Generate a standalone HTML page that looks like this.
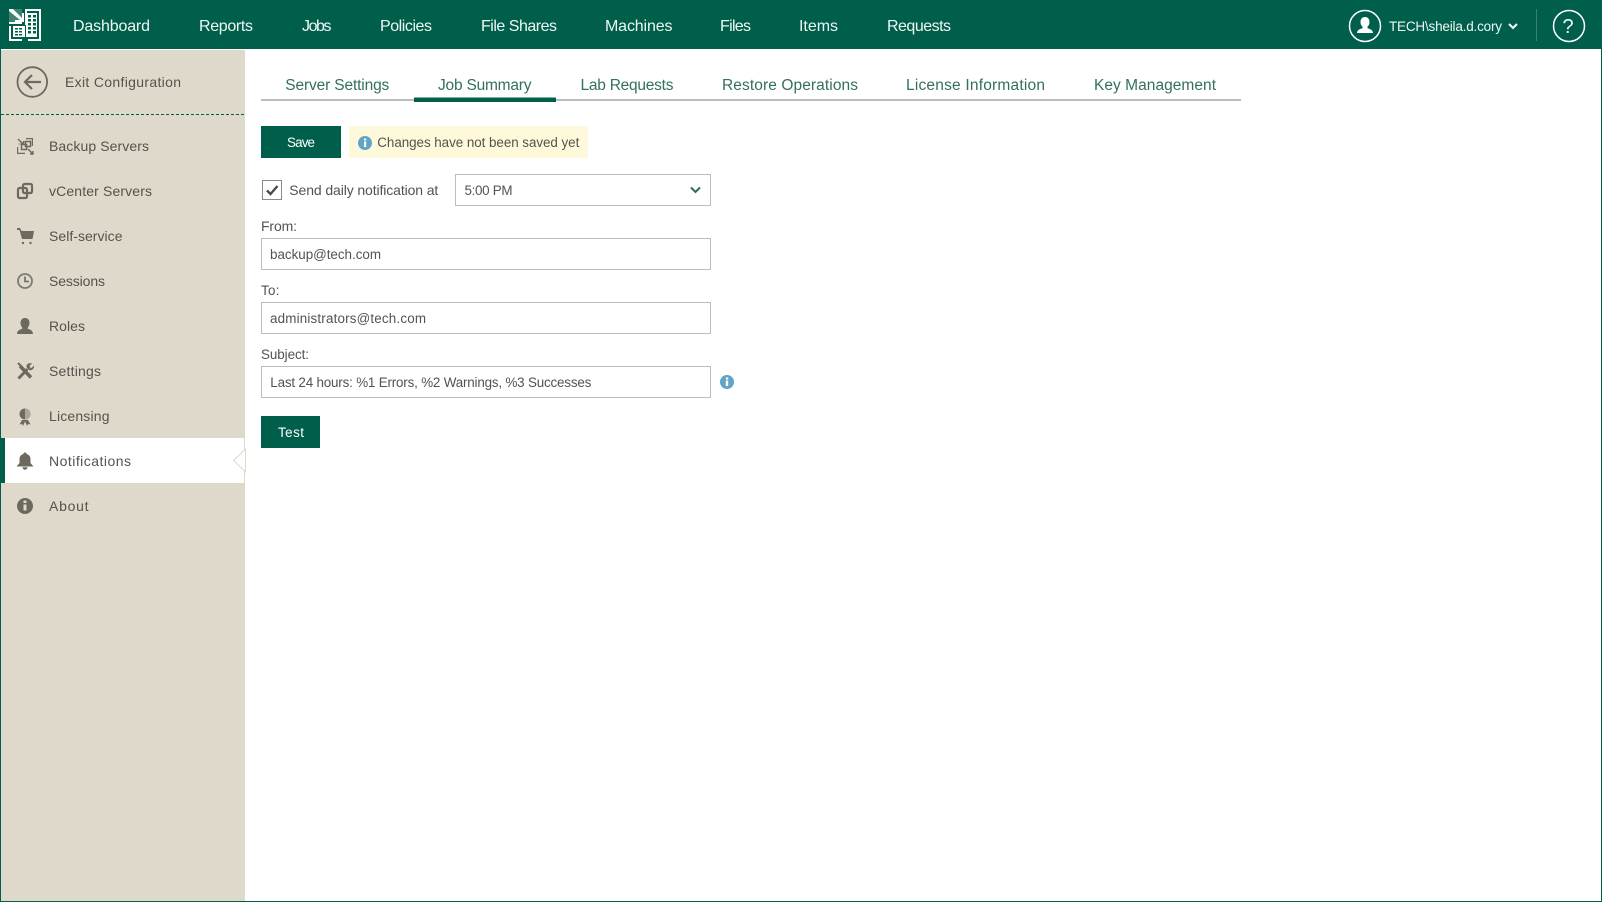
<!DOCTYPE html>
<html lang="en">
<head>
<meta charset="utf-8">
<title>Job Summary</title>
<style>
html,body{margin:0;padding:0;width:1602px;height:902px;overflow:hidden;background:#fff}
svg{display:block}
text{font-family:"Liberation Sans",Arial,sans-serif;font-size:14px;fill:#56524c}
.nav{font-size:16px;fill:#eef6f3}
.tab{font-size:15.500px;fill:#33705f}
.btn{fill:#fff;font-size:14px}
.sm{font-size:13.400px}
.ic{fill:#6d695f}
.g{fill:none;stroke:#6d695f}
.box{fill:#fff;stroke:#bdbdbd;stroke-width:1}
</style>
</head>
<body>
<svg xmlns="http://www.w3.org/2000/svg" width="1602" height="902" viewBox="0 0 1602 902">
<rect width="1602" height="902" fill="#fff"/>
<!-- frame -->
<rect x="0" y="0" width="1" height="902" fill="#005f4b"/>
<rect x="1601" y="0" width="1" height="902" fill="#005f4b"/>
<rect x="0" y="901" width="1602" height="1" fill="#005f4b"/>
<!-- top bar -->
<rect x="0" y="0" width="1602" height="49" fill="#005f4b"/>
<!-- logo -->
<g fill="#fff">
<rect x="9" y="9" width="13" height="13" fill="#3f8472"/>
<path d="M9 9h4l9 9v-5h2v9H15v-2h5L9 11z" fill="#fff"/>
<rect x="9" y="22" width="13" height="2"/>
<path d="M9 26h2v13h11v2H9z"/>
<path d="M25 9h16v32H28v-2h11V11H25z"/>
<rect x="13" y="26" width="12" height="11"/>
<rect x="26" y="13" width="11" height="24"/>
<rect x="25" y="9" width="2" height="16"/>
</g>
<g fill="#005f4b">
<rect x="15" y="28" width="3" height="1.500"/><rect x="19" y="28" width="3" height="1.500"/>
<rect x="15" y="31" width="3" height="1.500"/><rect x="19" y="31" width="3" height="1.500"/>
<rect x="15" y="34" width="3" height="1.500"/><rect x="19" y="34" width="3" height="1.500"/>
<rect x="28" y="15" width="3" height="2.500"/><rect x="33" y="15" width="3" height="2.500"/>
<rect x="28" y="19" width="3" height="2.500"/><rect x="33" y="19" width="3" height="2.500"/>
<rect x="28" y="23" width="3" height="2.500"/><rect x="33" y="23" width="3" height="2.500"/>
<rect x="28" y="27" width="3" height="2.500"/><rect x="33" y="27" width="3" height="2.500"/>
<rect x="28" y="31" width="3" height="2.500"/><rect x="33" y="31" width="3" height="2.500"/>
</g>
<!-- nav -->
<text class="nav" x="73" y="31" textLength="77" lengthAdjust="spacing">Dashboard</text>
<text class="nav" x="199" y="31" textLength="54" lengthAdjust="spacing">Reports</text>
<text class="nav" x="302" y="31" textLength="29.500" lengthAdjust="spacing">Jobs</text>
<text class="nav" x="380" y="31" textLength="52" lengthAdjust="spacing">Policies</text>
<text class="nav" x="481" y="31" textLength="76" lengthAdjust="spacing">File Shares</text>
<text class="nav" x="605" y="31" textLength="67.500" lengthAdjust="spacing">Machines</text>
<text class="nav" x="720" y="31" textLength="31" lengthAdjust="spacing">Files</text>
<text class="nav" x="799" y="31" textLength="39" lengthAdjust="spacing">Items</text>
<text class="nav" x="887" y="31" textLength="64" lengthAdjust="spacing">Requests</text>
<!-- user -->
<circle cx="1365" cy="26" r="15.500" fill="none" stroke="#fff" stroke-width="1.500"/>
<path d="M1365 17c3 0 4.500 2.200 4.500 5 0 2-.8 3.700-2 4.800v1.400c2.500.8 5.500 1.700 5.500 4.800h-16c0-3.100 3-4 5.500-4.800v-1.400c-1.200-1.100-2-2.800-2-4.800 0-2.800 1.500-5 4.500-5z" fill="#fff"/>
<text x="1389" y="31" textLength="113" lengthAdjust="spacing" style="font-size:13.500px;fill:#eef6f3">TECH\sheila.d.cory</text>
<path d="M1509 24l4 4 4-4" fill="none" stroke="#fff" stroke-width="2"/>
<rect x="1536" y="9" width="1" height="32" fill="#3a806e"/>
<circle cx="1569" cy="26" r="15.500" fill="none" stroke="#fff" stroke-width="1.500"/>
<text x="1562.500" y="33" textLength="13" style="font-size:20px;fill:#eef6f3">?</text>
<!-- sidebar -->
<rect x="1" y="50" width="244" height="851" fill="#dfd9cc"/>
<circle cx="32.300" cy="82" r="14.800" fill="none" stroke="#6d695f" stroke-width="1.800"/>
<path d="M41 82H25.500M32 75l-7 7 7 7" fill="none" stroke="#6d695f" stroke-width="2.200"/>
<text x="65" y="87" textLength="116" lengthAdjust="spacing">Exit Configuration</text>
<line x1="1" y1="114.500" x2="245" y2="114.500" stroke="#005f4b" stroke-width="1" stroke-dasharray="3 2"/>
<!-- active row -->
<rect x="5" y="438" width="239" height="45" fill="#fff"/>
<rect x="0" y="438" width="5" height="45" fill="#005f4b"/>
<path d="M245.500 449l-12 11.500 12 11.500z" fill="#fff" stroke="#dfd9cc" stroke-width="1"/>
<!-- sidebar items -->
<text x="49" y="151" textLength="100" lengthAdjust="spacing">Backup Servers</text>
<text x="49" y="196" textLength="103" lengthAdjust="spacing">vCenter Servers</text>
<text x="49" y="241" textLength="73.500" lengthAdjust="spacing">Self-service</text>
<text x="49" y="286" textLength="56" lengthAdjust="spacing">Sessions</text>
<text x="49" y="331" textLength="36" lengthAdjust="spacing">Roles</text>
<text x="49" y="376" textLength="52" lengthAdjust="spacing">Settings</text>
<text x="49" y="421" textLength="60.500" lengthAdjust="spacing">Licensing</text>
<text x="49" y="466" textLength="82" lengthAdjust="spacing">Notifications</text>
<text x="49" y="511" textLength="39.500" lengthAdjust="spacing">About</text>
<!-- sidebar icons -->
<g class="g" stroke-width="1.200">
<path d="M26 138.600h6.400v7.400M17.600 147v6.400h7.400"/>
<path d="M24.500 141.500h-.5M19 143.500v1" />
<rect x="21.500" y="144.500" width="5" height="5" stroke-width="1.500"/>
<rect x="25.500" y="141.500" width="5" height="5" stroke-width="1.500"/>
<path d="M18 139l5 5M20.500 144h3v-3M28 149l5 5M30 154h3v-3" stroke-width="1.400"/>
</g>
<g class="g" stroke-width="2.200">
<rect x="18" y="188" width="9" height="10" rx="1.500"/>
<rect x="23" y="184" width="9" height="9" rx="1.500"/>
</g>
<path class="ic" d="M17 228h3l1.500 3h12.500l-1.500 8H22l-2.500-9H17z"/>
<circle class="ic" cx="23" cy="243" r="1.200"/><circle class="ic" cx="30.500" cy="243" r="1.200"/>
<circle cx="25" cy="281" r="7" fill="none" stroke="#7d7a72" stroke-width="1.800"/>
<path d="M25 276.500V281.500h4" fill="none" stroke="#6d695f" stroke-width="1.600"/>
<path class="ic" d="M25 318c3 0 4.500 2.300 4.500 5 0 2-.8 3.500-1.700 4.500v1.200c2.500.8 5.200 1.800 5.200 5.300H17c0-3.500 2.700-4.500 5.200-5.300v-1.200c-.9-1-1.700-2.500-1.700-4.500 0-2.700 1.500-5 4.500-5z"/>
<path d="M20 366l11 11.500" fill="none" stroke="#6d695f" stroke-width="3.500"/>
<path d="M18.500 378.500l9-9.500" fill="none" stroke="#6d695f" stroke-width="3"/>
<path d="M18 363l4 4" fill="none" stroke="#6d695f" stroke-width="2"/>
<path class="ic" d="M32 363.500l-2.500 2.500.5 1.500 1.500.5 2.500-2.500c.6 2.800-1.800 5.500-4.800 4.500l-2.500-2.500c-1-3 2-5.300 5.300-4z"/>
<circle cx="25" cy="414" r="5.500" fill="#6d695f"/>
<path d="M25 408.500a5.500 5.500 0 0 1 0 11z" fill="#dfd9cc" opacity=".55"/>
<path class="ic" d="M22 420l-2.500 4.500 2.500-.5 1 2 2-4.500 2 4.500 1-2 2.500.5L28 420z"/>
<path class="ic" d="M25 452.500c1 0 1.600.6 1.600 1.500 2.600.8 3.900 2.600 3.900 5.200v3.800l3 3.500H16.500l3-3.500v-3.800c0-2.600 1.300-4.400 3.900-5.200 0-.9.600-1.500 1.600-1.500zM22.500 467.300h5c0 1.400-1.100 2.400-2.500 2.400s-2.500-1-2.500-2.400z"/>
<circle class="ic" cx="25" cy="506" r="8"/>
<rect x="23.500" y="504.500" width="3" height="6" fill="#dfd9cc"/>
<rect x="23.500" y="500.500" width="3" height="2.500" fill="#dfd9cc"/>
<!-- tabs -->
<rect x="261" y="99" width="980" height="2" fill="#bdbdbd"/>
<rect x="414" y="97.500" width="142" height="4.500" fill="#005f4b"/>
<text class="tab" x="285.300" y="90" textLength="104" lengthAdjust="spacing">Server Settings</text>
<text class="tab" x="438" y="90" textLength="93.500" lengthAdjust="spacing">Job Summary</text>
<text class="tab" x="580.500" y="90" textLength="93" lengthAdjust="spacing">Lab Requests</text>
<text class="tab" x="722" y="90" textLength="136" lengthAdjust="spacing">Restore Operations</text>
<text class="tab" x="906" y="90" textLength="139" lengthAdjust="spacing">License Information</text>
<text class="tab" x="1094" y="90" textLength="122" lengthAdjust="spacing">Key Management</text>
<!-- save row -->
<rect x="261" y="126" width="80" height="32" fill="#005f4b"/>
<text class="btn sm" x="287" y="147" textLength="28" lengthAdjust="spacing">Save</text>
<rect x="349" y="126" width="239" height="32" fill="#fff9dc"/>
<circle cx="365" cy="143" r="7" fill="#62a4c7"/>
<rect x="364" y="141.500" width="2.200" height="5.500" fill="#fff"/>
<rect x="364" y="138.500" width="2.200" height="2" fill="#fff"/>
<text class="sm" x="377.300" y="147" textLength="202" lengthAdjust="spacing">Changes have not been saved yet</text>
<!-- checkbox row -->
<rect x="262.500" y="180.500" width="19" height="19" fill="#fff" stroke="#8a8a8a"/>
<path d="M267 190.500l3.500 3.500 7-8" fill="none" stroke="#4a4a4a" stroke-width="2.400"/>
<text x="289.300" y="195" textLength="149" lengthAdjust="spacing">Send daily notification at</text>
<rect class="box" x="455.500" y="174.500" width="255" height="31"/>
<text class="sm" x="464.500" y="195" textLength="48" lengthAdjust="spacing">5:00 PM</text>
<path d="M691 187.500l4.500 4.500 4.500-4.500" fill="none" stroke="#2f6b57" stroke-width="2"/>
<!-- from -->
<text x="261" y="231" textLength="36" lengthAdjust="spacing">From:</text>
<rect class="box" x="261.500" y="238.500" width="449" height="31"/>
<text class="sm" x="270" y="259" textLength="111" lengthAdjust="spacing">backup@tech.com</text>
<text class="sm" x="261" y="295" textLength="18.500" lengthAdjust="spacing">To:</text>
<rect class="box" x="261.500" y="302.500" width="449" height="31"/>
<text class="sm" x="270" y="323" textLength="156" lengthAdjust="spacing">administrators@tech.com</text>
<text class="sm" x="261" y="359" textLength="48" lengthAdjust="spacing">Subject:</text>
<rect class="box" x="261.500" y="366.500" width="449" height="31"/>
<text class="sm" x="270.300" y="387" textLength="321" lengthAdjust="spacing">Last 24 hours: %1 Errors, %2 Warnings, %3 Successes</text>
<circle cx="727" cy="382" r="7" fill="#62a4c7"/>
<rect x="725.800" y="380.500" width="2.400" height="5.500" fill="#fff"/>
<rect x="725.800" y="377.500" width="2.400" height="2" fill="#fff"/>
<!-- test -->
<rect x="261" y="416" width="59" height="32" fill="#005f4b"/>
<text class="btn sm" x="278" y="437" textLength="26" lengthAdjust="spacing">Test</text>
</svg>
</body>
</html>
